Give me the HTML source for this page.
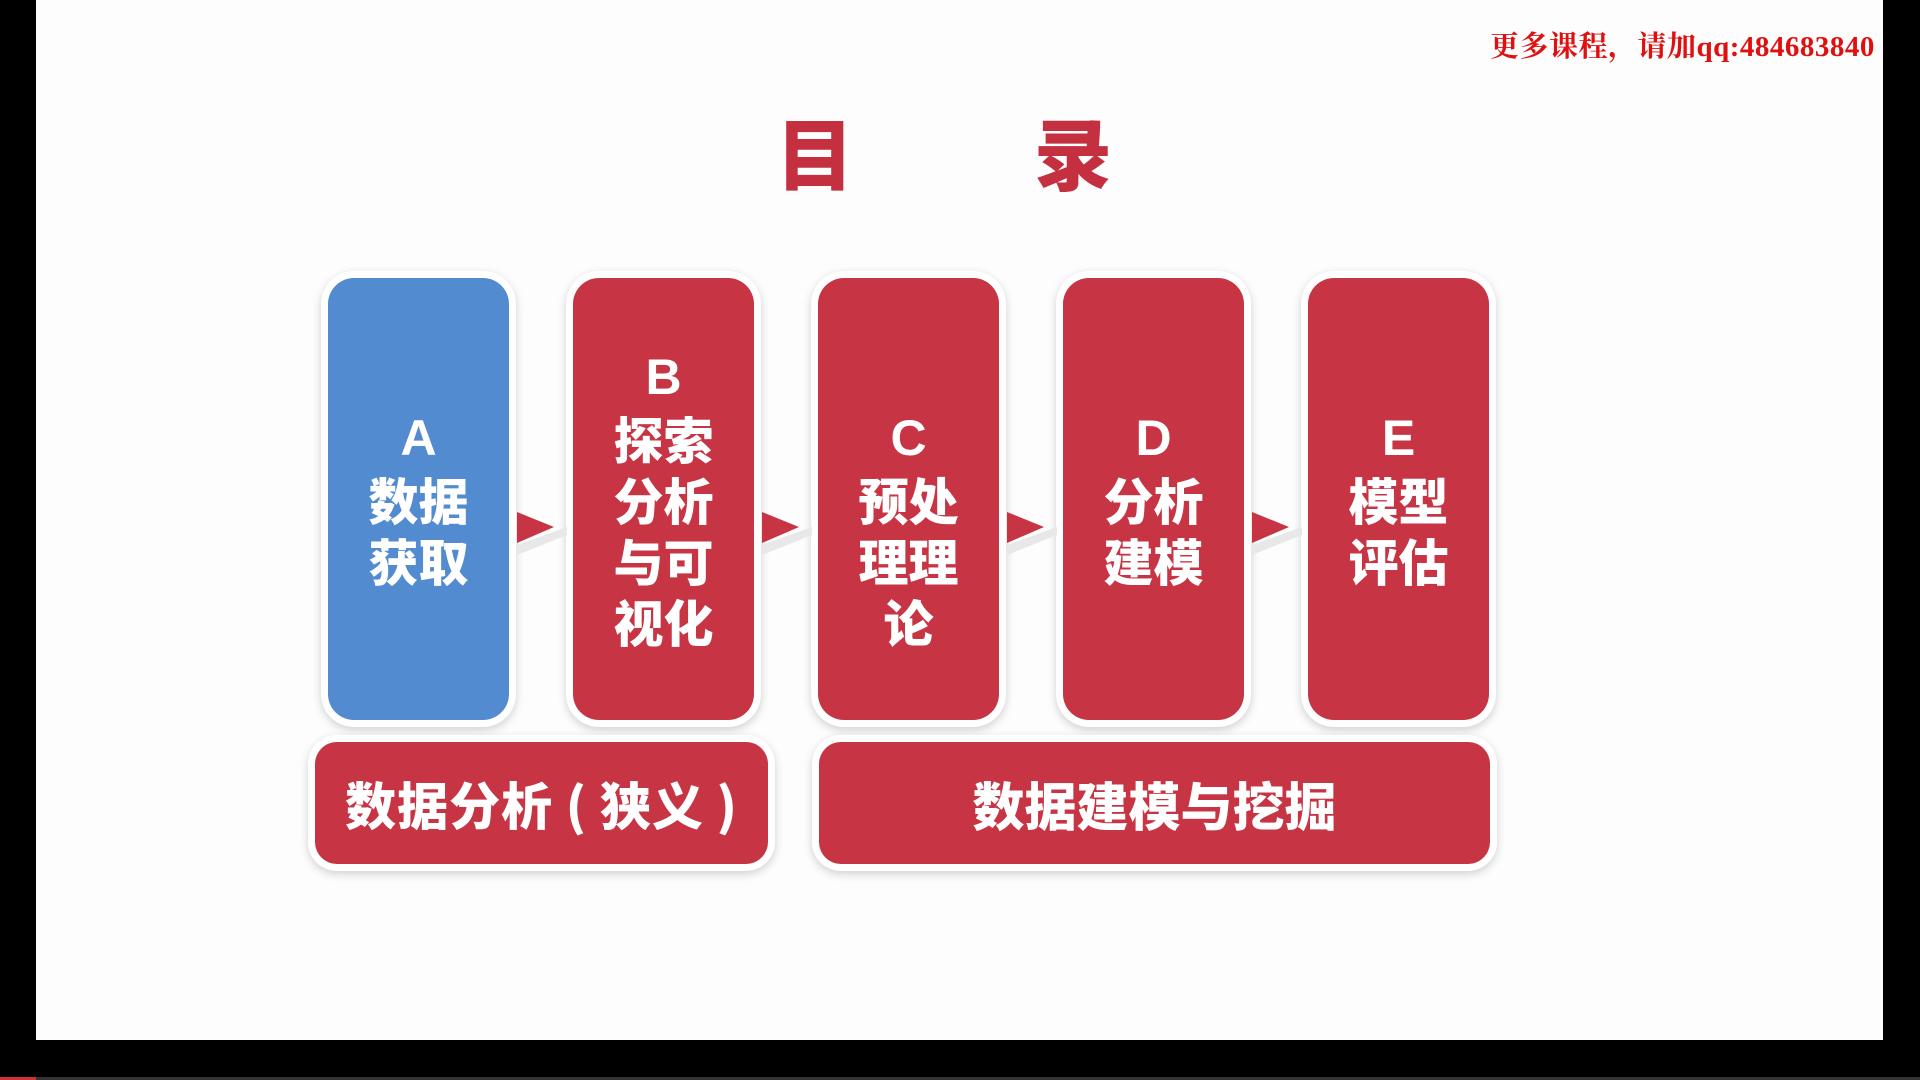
<!DOCTYPE html>
<html><head><meta charset="utf-8"><style>
html,body{margin:0;padding:0;}
body{width:1920px;height:1080px;background:#000;position:relative;overflow:hidden;font-family:"Liberation Sans","Noto Sans CJK SC",sans-serif;}
.slide{position:absolute;left:36px;top:0;width:1847px;height:1040px;background:#fdfdfd;}
.bar{position:absolute;left:0;top:1077px;width:1920px;height:3px;background:#333;}
.red{position:absolute;left:0;top:1077px;width:36px;height:3px;background:#c33;}
.wm{position:absolute;left:1490px;top:24px;font-family:"Liberation Serif","Noto Serif CJK SC",serif;font-weight:bold;color:#e01010;font-size:29px;white-space:nowrap;letter-spacing:0.5px;}
.title{position:absolute;top:106px;font-size:78px;font-weight:900;color:#c4303f;line-height:90px;font-family:"Noto Sans CJK SC",sans-serif;}
.box{position:absolute;top:278px;width:181px;height:442px;border-radius:26px;background:#c73443;box-shadow:0 0 0 7px #fff,0 3px 9px 7px rgba(0,0,0,0.18);color:#fff;font-weight:900;font-family:"Noto Sans CJK SC",sans-serif;font-size:50px;line-height:61px;text-align:center;display:flex;flex-direction:column;justify-content:center;box-sizing:border-box;}
.box.b{background:#528bd0;}
.box span{display:block;}
.lt{font-family:"Liberation Sans",sans-serif;font-weight:bold;font-size:50px;}
.wide{position:absolute;top:742px;height:122px;border-radius:22px;background:#c73443;box-shadow:0 0 0 7px #fff,0 3px 9px 7px rgba(0,0,0,0.18);color:#fff;font-weight:900;font-family:"Noto Sans CJK SC",sans-serif;font-size:51px;display:flex;align-items:center;justify-content:center;white-space:pre;}
.arr{position:absolute;top:505px;}
</style></head><body>
<div class="slide"></div>
<div class="bar"></div><div class="red"></div>
<div class="wm">更多课程，请加qq:484683840</div>
<div class="title" style="left:776px">目</div>
<div class="title" style="left:1034px">录</div>

<div class="box b" style="left:328px"><span class="lt">A</span><span>数据</span><span>获取</span></div>
<div class="box" style="left:573px"><span class="lt">B</span><span>探索</span><span>分析</span><span>与可</span><span>视化</span></div>
<div class="box" style="left:818px;padding-top:61px"><span class="lt">C</span><span>预处</span><span>理理</span><span>论</span></div>
<div class="box" style="left:1063px"><span class="lt">D</span><span>分析</span><span>建模</span></div>
<div class="box" style="left:1308px"><span class="lt">E</span><span>模型</span><span>评估</span></div>

<svg class="arr" style="left:512px" width="60" height="55"><path d="M5 40 L55 22 L55 30 L5 50 Z" fill="#e8e8e8"/><path d="M5 7 L42 22 L5 38 Z" fill="#c73443"/></svg>
<svg class="arr" style="left:757px" width="60" height="55"><path d="M5 40 L55 22 L55 30 L5 50 Z" fill="#e8e8e8"/><path d="M5 7 L42 22 L5 38 Z" fill="#c73443"/></svg>
<svg class="arr" style="left:1002px" width="60" height="55"><path d="M5 40 L55 22 L55 30 L5 50 Z" fill="#e8e8e8"/><path d="M5 7 L42 22 L5 38 Z" fill="#c73443"/></svg>
<svg class="arr" style="left:1247px" width="60" height="55"><path d="M5 40 L55 22 L55 30 L5 50 Z" fill="#e8e8e8"/><path d="M5 7 L42 22 L5 38 Z" fill="#c73443"/></svg>

<div class="wide" style="left:315px;width:453px;letter-spacing:1px;">数据分析 ( 狭义 )</div>
<div class="wide" style="left:819px;width:671px;font-size:52px;">数据建模与挖掘</div>
</body></html>
